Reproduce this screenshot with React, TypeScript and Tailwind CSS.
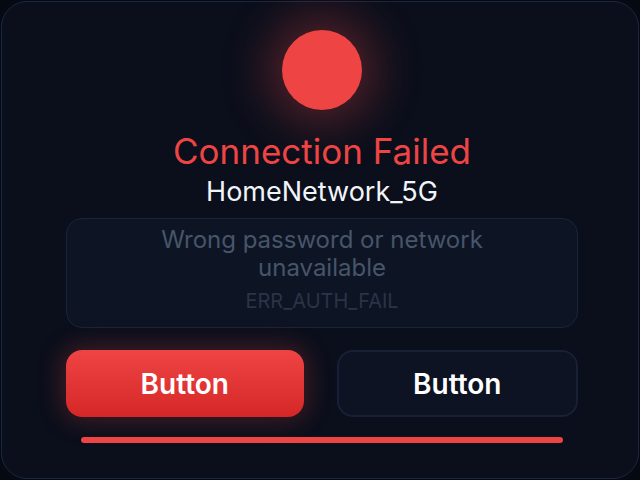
export default function App() {
  return (
    <div className="h-[480px] w-[640px] bg-[#050912] p-px font-['Inter',sans-serif]">
      <div className="flex h-full flex-col items-center rounded-[26px] border border-[#1b2640] bg-[#0a0f1b] pl-16 pr-[60px] pt-[28px]">
        <div className="h-20 w-20 rounded-full bg-[#ef4444] shadow-[0_0_48px_14px_rgba(239,68,68,0.32)]" />
        <h1 className="mt-[21px] text-[35px] leading-[40px] font-normal text-[#ef4444]">Connection Failed</h1>
        <p className="mt-[5px] text-[27px] leading-8 text-[#f1f5f9]">HomeNetwork_5G</p>
        <div className="mt-[10px] flex w-full flex-col items-center rounded-2xl border border-[#1a2438] bg-[#0d1424] px-20 pb-[14px] pt-[7px] text-center">
          <p className="text-[24px] leading-[28px] text-[#475569]">Wrong password or network unavailable</p>
          <p className="mt-[7px] text-[20px] leading-6 text-[#2a3446]">ERR_AUTH_FAIL</p>
        </div>
        <div className="mt-[22px] flex w-full gap-[33px]">
          <button
            type="button"
            className="h-[67px] flex-1 rounded-2xl bg-gradient-to-b from-[#ef4444] to-[#d52626] text-[28px] font-semibold text-white shadow-[0_0_24px_4px_rgba(239,68,68,0.25)]"
          >
            Button
          </button>
          <button
            type="button"
            className="h-[67px] flex-1 rounded-2xl border-2 border-[#172036] bg-[#0d1322] text-[28px] font-semibold text-white"
          >
            Button
          </button>
        </div>
        <div className="mt-5 h-[6px] w-[482px] rounded-full bg-[#ef4444]" />
      </div>
    </div>
  )
}
